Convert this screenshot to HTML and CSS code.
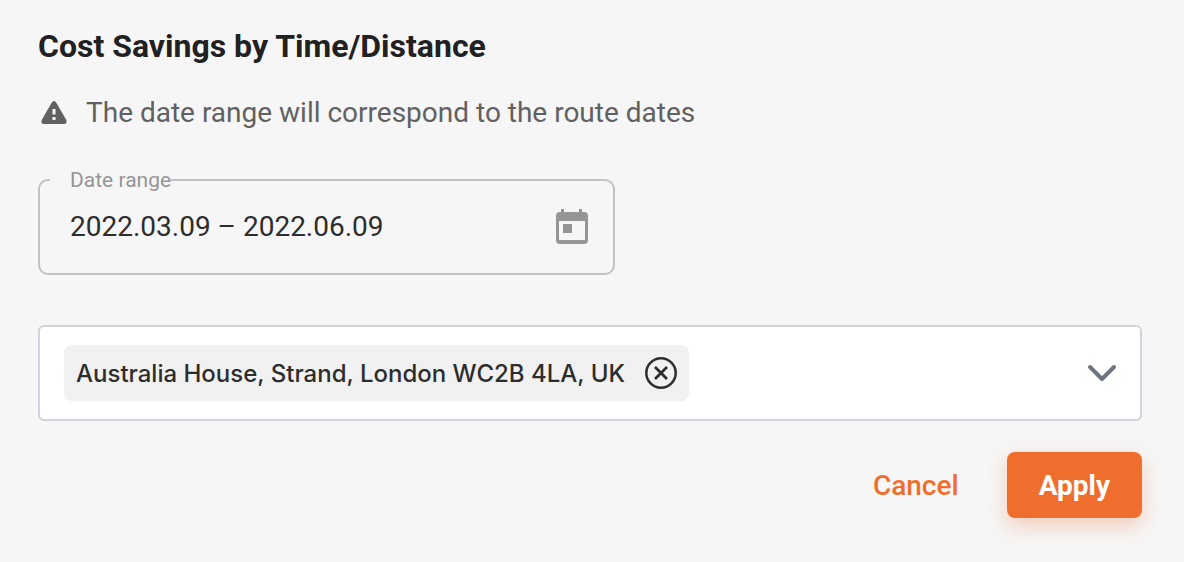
FILE: index.html
```html
<!DOCTYPE html>
<html lang="en">
<head>
    <meta charset="UTF-8">
    <meta name="viewport" content="width=device-width, initial-scale=1.0">
    <title>Cost Savings by Time/Distance</title>
    <link rel="stylesheet" href="styles.css">
</head>
<body>
    <form class="filter-form">
        <h1 class="title">Cost Savings by Time/Distance</h1>
        <p class="notice">
            <svg class="notice-icon" width="32" height="32" viewBox="0 0 32 32" aria-hidden="true">
                <path fill="#616161" fill-rule="evenodd" d="M13.8 5.6Q16 2.600 18.200 5.600L28.300 23Q29.500 26.800 26 27H6Q2.500 26.800 3.700 23ZM14.500 12V17.500H17.500V12ZM14.500 20V23H17.500V20Z"/>
            </svg>
            The date range will correspond to the route dates
        </p>
        <fieldset class="date-field">
            <legend class="date-legend"><label for="dateRange">Date range</label></legend>
            <div class="date-row">
                <input type="text" id="dateRange" class="date-input" value="2022.03.09 – 2022.06.09">
                <button type="button" class="icon-button" aria-label="Open calendar">
                    <svg width="34" height="36" viewBox="0 0 34 36">
                        <path fill="#959595" fill-rule="evenodd" d="M6 1H9V4H24V1H27V4H29Q33 4 33 8V32Q33 36 29 36H5Q1 36 1 32V8Q1 4 5 4H6ZM4 13V31Q4 32 5 32H29Q30 32 30 31V13ZM8 16H17V25H8Z"/>
                    </svg>
                </button>
            </div>
        </fieldset>
        <div class="place-select">
            <div class="chip">
                <span class="chip-text">Australia House, Strand, London WC2B 4LA, UK</span>
                <button type="button" class="icon-button" aria-label="Remove place">
                    <svg width="32" height="32" viewBox="0 0 32 32" fill="none" stroke="#2d2d2d">
                        <circle cx="16" cy="16" r="14.700" stroke-width="2.500"/>
                        <path stroke-width="2.800" d="M10 10L22 22M22 10L10 22"/>
                    </svg>
                </button>
            </div>
            <input type="text" class="place-input" aria-label="Places">
            <button type="button" class="icon-button" aria-label="Show places">
                <svg width="32" height="32" viewBox="0 0 32 32">
                    <path fill="none" stroke="#6c757d" stroke-width="4" stroke-linecap="round" stroke-linejoin="round" d="M4 10L16 22L28 10"/>
                </svg>
            </button>
        </div>
        <div class="actions">
            <button type="button" class="cancel-button">Cancel</button>
            <button type="submit" class="apply-button">Apply</button>
        </div>
    </form>
</body>
</html>
```

FILE: styles.css
```css
body {
    margin: 0;
    background-color: #f6f6f6;
    font-family: Roboto, sans-serif;
    color: #212121;
}
.filter-form {
    padding: 26px 42px 44px 38px;
}
.title {
    margin: 0;
    font-size: 32px;
    line-height: 40px;
    font-weight: 700;
}
.notice {
    display: flex;
    align-items: center;
    gap: 16px;
    margin: 29px 0 0;
    font-size: 28px;
    line-height: 36px;
    color: #616161;
}
.notice-icon {
    flex-shrink: 0;
}
.date-field {
    width: 100%;
    max-width: 577px;
    margin: 37px 0 0;
    padding: 0 24px 29px 10px;
    border: 2px solid #c2c2c2;
    border-radius: 10px;
    box-sizing: border-box;
}
.date-legend {
    padding: 0 0 0 20px;
    font-size: 21px;
    line-height: 24px;
    color: #959595;
}
.date-row {
    display: flex;
    align-items: center;
    padding: 16px 0 0 20px;
}
.date-input {
    flex: 1;
    min-width: 0;
    height: 36px;
    padding: 0;
    border: none;
    outline: none;
    background: none;
    font-family: inherit;
    font-size: 28px;
    color: #2d2d2d;
}
.icon-button {
    display: flex;
    flex-shrink: 0;
    padding: 0;
    border: none;
    background: none;
    cursor: pointer;
}
.place-select {
    display: flex;
    align-items: center;
    margin-top: 50px;
    padding: 18px 22px 18px 24px;
    border: 2px solid #ced4da;
    border-radius: 6px;
    background-color: #fff;
}
.chip {
    display: flex;
    align-items: center;
    gap: 20px;
    padding: 12px;
    border-radius: 8px;
    background-color: #f1f1f1;
}
.chip-text {
    padding-top: 2px;
    font-family: Inter, sans-serif;
    font-size: 24px;
    line-height: 30px;
    font-weight: 500;
    color: #2d2d2d;
}
.place-input {
    flex: 1;
    min-width: 0;
    padding: 0;
    border: none;
    outline: none;
    background: none;
}
.actions {
    display: flex;
    justify-content: flex-end;
    gap: 16px;
    margin-top: 31px;
}
.cancel-button, .apply-button {
    padding: 17px 32px 15px;
    border: none;
    border-radius: 8px;
    font-family: inherit;
    font-size: 28px;
    line-height: 34px;
    cursor: pointer;
}
.cancel-button {
    background: none;
    color: #ef6e2e;
    font-weight: 500;
}
.apply-button {
    background-color: #ef6e2e;
    color: #fff;
    font-weight: 700;
    box-shadow: 0 8px 20px rgba(239, 110, 46, 0.3);
}
```
